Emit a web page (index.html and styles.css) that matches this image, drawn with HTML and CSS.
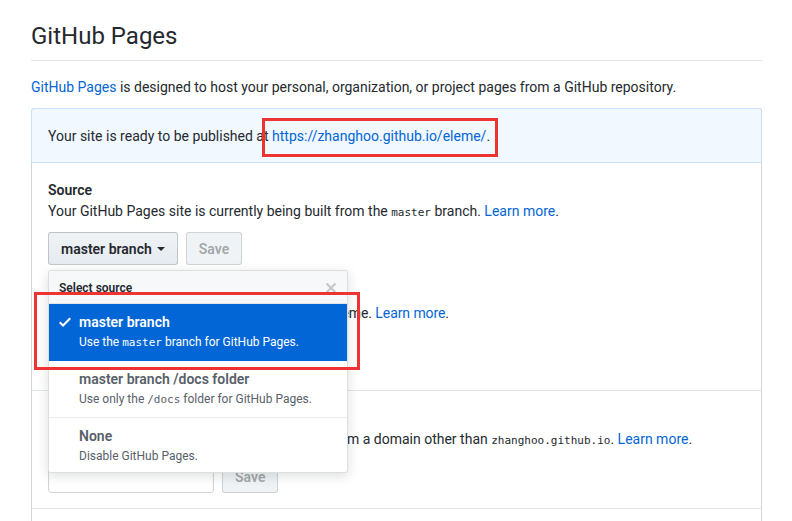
FILE: index.html
```html
<!DOCTYPE html>
<html lang="en">
<head>
<meta charset="utf-8">
<title>GitHub Pages</title>
<link rel="stylesheet" href="styles.css">
</head>
<body>
<div class="page">
  <h2 class="title">GitHub Pages</h2>
  <p class="lead"><a href="#" class="link">GitHub Pages</a> is designed to host your personal, organization, or project pages from a GitHub repository.</p>

  <div class="box">
    <div class="flash">Your site is ready to be published at <a href="#" class="link">https://zhanghoo.github.io/eleme/</a>.</div>

    <div class="row row-first">
      <div class="group">
        <div class="label">Source</div>
        <p class="note">Your GitHub Pages site is currently being built from the <code>master</code> branch. <a href="#" class="link">Learn more</a>.</p>
        <div class="actions">
          <div class="select-wrap">
            <button class="btn">master branch <span class="caret"></span></button>
            <div class="menu">
              <div class="menu-header">
                <span class="menu-title">Select source</span>
                <svg class="menu-close" width="12" height="16" viewBox="0 0 12 16"><path d="M7.48 8l3.75 3.75-1.48 1.48L6 9.48l-3.75 3.75-1.48-1.48L4.52 8 .77 4.25l1.48-1.48L6 6.52l3.75-3.75 1.48 1.48L7.48 8z"/></svg>
              </div>
              <div class="menu-item selected">
                <svg class="check" width="12" height="16" viewBox="0 0 12 16"><path d="M12 5l-8 8-4-4 1.5-1.5L4 10l6.5-6.5L12 5z"/></svg>
                <div class="item-title">master branch</div>
                <div class="item-desc">Use the <code>master</code> branch for GitHub Pages.</div>
              </div>
              <div class="menu-item">
                <div class="item-title">master branch /docs folder</div>
                <div class="item-desc">Use only the <code>/docs</code> folder for GitHub Pages.</div>
              </div>
              <div class="menu-item">
                <div class="item-title">None</div>
                <div class="item-desc">Disable GitHub Pages.</div>
              </div>
            </div>
          </div>
          <button class="btn disabled">Save</button>
        </div>
      </div>
      <div class="group theme">
        <div class="label">Theme chooser</div>
        <p class="note theme-note">Pick a theme to publish your site with a Jekyll theme. <a href="#" class="link">Learn more</a>.</p>
        <div class="actions">
          <button class="btn">Choose a theme</button>
        </div>
      </div>
    </div>

    <div class="row">
      <div class="label">Custom domain</div>
      <p class="note">Custom domains allow you to serve your site from a domain other than <code>zhanghoo.github.io</code>. <a href="#" class="link">Learn more</a>.</p>
      <div class="actions">
        <input class="input" type="text" aria-label="Custom domain">
        <button class="btn disabled">Save</button>
      </div>
    </div>

    <div class="row row-empty"></div>
  </div>

  <div class="mark mark-url"></div>
  <div class="mark mark-item"></div>
</div>
</body>
</html>
```

FILE: styles.css
```css
* { box-sizing: border-box; }

html, body { margin: 0; background: #fff; }

body {
  font-family: Roboto, "Noto Sans", sans-serif;
  font-size: 14px;
  line-height: 21px;
  color: #24292e;
  overflow: hidden;
}

code {
  font-family: "DejaVu Sans Mono", "Liberation Mono", monospace;
  font-size: 11px;
  line-height: 1;
}

.link { color: #0366d6; text-decoration: none; }

.page {
  position: relative;
  padding: 21px 0 0 31px;
  width: 762px;
}

.title {
  margin: 0;
  font-size: 24px;
  font-weight: 400;
  line-height: 30px;
  padding-bottom: 9px;
  border-bottom: 1px solid #e1e4e8;
}

.lead { margin: 16px 0 10px; }

.box {
  border: 1px solid #d1d5da;
  border-top: 0;
  border-radius: 3px;
}

.flash {
  margin: 0 -1px;
  padding: 17px 16px 15px;
  background: #f1f8ff;
  border: 1px solid #c8e1ff;
  border-radius: 3px 3px 0 0;
}

.row {
  padding: 17px 16px 15px;
  border-top: 1px solid #e1e4e8;
}
.row-first { border-top: 0; }
.row-empty { height: 40px; }

.label { font-weight: 600; }
.note { margin: 0; }

.actions {
  display: flex;
  align-items: center;
  gap: 8px;
  margin-top: 10px;
}

.theme { margin-top: 17px; padding-bottom: 8px; }
.theme-note { letter-spacing: -0.08px; }

.select-wrap { position: relative; }

.btn {
  display: inline-flex;
  align-items: center;
  height: 33px;
  padding: 0 12px;
  font-family: inherit;
  font-size: 14px;
  font-weight: 600;
  line-height: 20px;
  color: #24292e;
  background: linear-gradient(#eff3f6, #e6ebf1);
  border: 1px solid rgba(27, 31, 35, 0.2);
  border-radius: 3px;
}
.btn.disabled {
  color: rgba(36, 41, 46, 0.4);
  background: #eff3f6;
  border-color: rgba(27, 31, 35, 0.15);
}

.caret {
  display: inline-block;
  margin-left: 5px;
  border-top: 4px solid #24292e;
  border-left: 4px solid transparent;
  border-right: 4px solid transparent;
}

.input {
  width: 166px;
  height: 33px;
  border: 1px solid #d1d5da;
  border-radius: 3px;
  box-shadow: inset 0 1px 2px rgba(27, 31, 35, 0.075);
  font-family: inherit;
}

/* dropdown menu */
.menu {
  position: absolute;
  top: calc(100% + 5px);
  left: 0;
  width: 300px;
  background: #fff;
  border: 1px solid rgba(27, 31, 35, 0.15);
  border-radius: 3px;
  box-shadow: 0 3px 12px rgba(27, 31, 35, 0.15);
  overflow: hidden;
  z-index: 5;
}

.menu-header {
  display: flex;
  justify-content: space-between;
  align-items: center;
  padding: 9px 10px 7px;
  line-height: 16px;
  background: #f6f8fa;
  border-bottom: 1px solid #e1e4e8;
}
.menu-title { font-size: 12px; font-weight: 600; }
.menu-close { fill: #c3c8cd; }

.menu-item {
  position: relative;
  padding: 8px 8px 8px 30px;
  color: #586069;
  border-bottom: 1px solid #eaecef;
}
.menu-item:last-child { border-bottom: 0; padding-bottom: 6px; }

.item-title { font-weight: 600; line-height: 21px; }
.item-desc { font-size: 12px; line-height: 19px; }

.menu-item.selected {
  background: #0366d6;
  color: #fff;
  border-bottom-color: #0366d6;
}

.check {
  position: absolute;
  left: 10px;
  top: 10px;
  fill: #fff;
}

/* annotation rectangles */
.mark {
  position: absolute;
  border: 3px solid #ee3333;
  pointer-events: none;
  z-index: 10;
}
.mark-url { left: 262px; top: 118px; width: 236px; height: 39px; }
.mark-item { left: 34px; top: 292px; width: 326px; height: 78px; }
```
